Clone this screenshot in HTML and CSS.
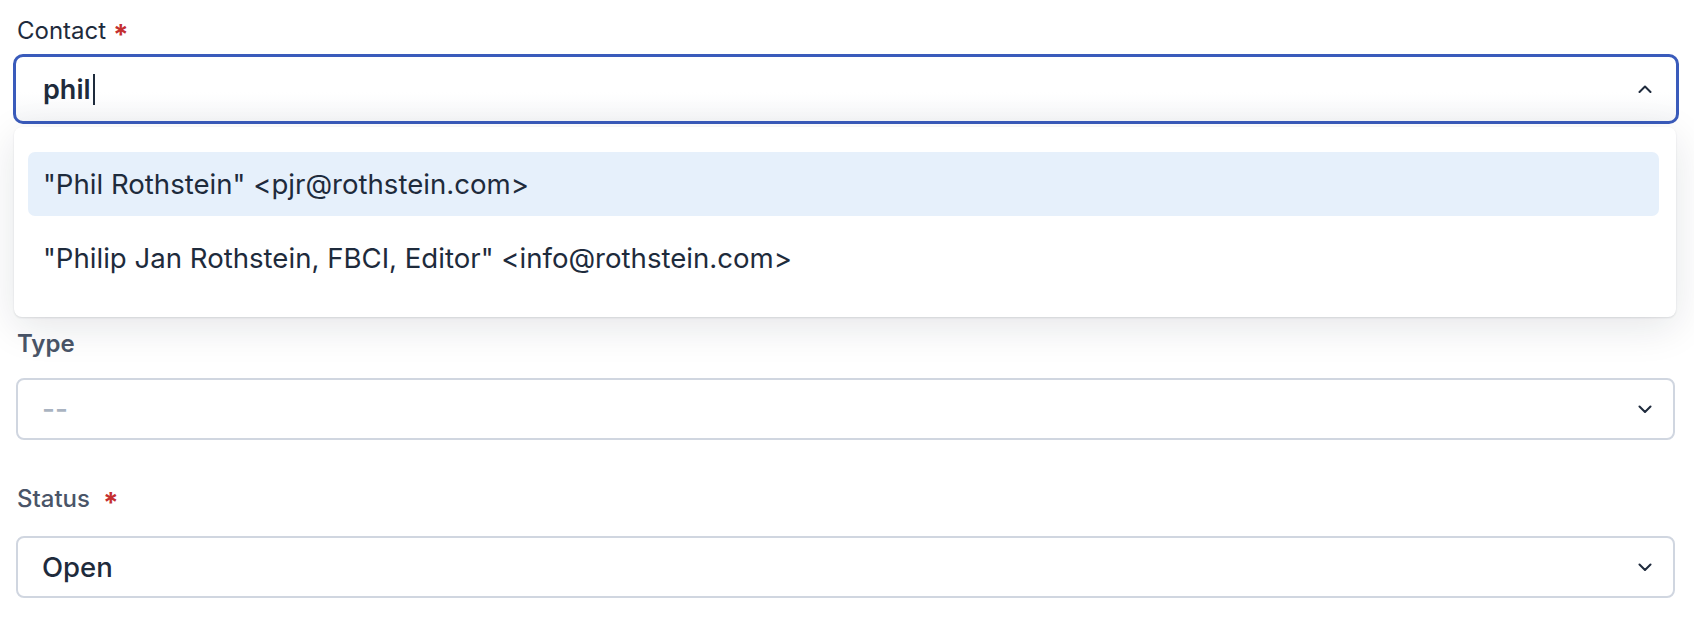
FILE: index.html
```html
<!DOCTYPE html>
<html lang="en">
<head>
<meta charset="utf-8">
<title>Contact form</title>
<link rel="stylesheet" href="styles.css">
</head>
<body>
<form class="form">
  <div class="field field-contact">
    <label class="label label-dark">Contact <span class="req">*</span></label>
    <div class="combo">
      <div class="combo-input">
        <span class="typed">phil</span><span class="caret"></span>
        <svg class="chev chev-up" viewBox="0 0 14 8" width="14" height="8"><path d="M1.5 7 L7 1.5 L12.5 7" fill="none" stroke="#1f2b3d" stroke-width="2" stroke-linecap="round" stroke-linejoin="round"/></svg>
      </div>
      <ul class="menu">
        <li class="option active">"Phil Rothstein" &lt;pjr@rothstein.com&gt;</li>
        <li class="option">"Philip Jan Rothstein, FBCI, Editor" &lt;info@rothstein.com&gt;</li>
      </ul>
    </div>
  </div>

  <div class="field field-type">
    <label class="label label-type">Type</label>
    <div class="select">
      <span class="placeholder">--</span>
      <svg class="chev" viewBox="0 0 14 8" width="14" height="8"><path d="M1.5 1.5 L7 7 L12.5 1.5" fill="none" stroke="#1f2b3d" stroke-width="2" stroke-linecap="round" stroke-linejoin="round"/></svg>
    </div>
  </div>

  <div class="field field-status">
    <label class="label label-status">Status <span class="req">*</span></label>
    <div class="select">
      <span class="value">Open</span>
      <svg class="chev" viewBox="0 0 14 8" width="14" height="8"><path d="M1.5 1.5 L7 7 L12.5 1.5" fill="none" stroke="#1f2b3d" stroke-width="2" stroke-linecap="round" stroke-linejoin="round"/></svg>
    </div>
  </div>
</form>
</body>
</html>
```

FILE: styles.css
```css
* { box-sizing: border-box; }
html, body { margin: 0; padding: 0; background: #ffffff; }
body {
  font-family: Inter, "Noto Sans", "Liberation Sans", sans-serif;
  color: #1e2b3c;
}
.form {
  padding: 15px 15px 0 13px;
  display: flex;
  flex-direction: column;
}
.field { display: flex; flex-direction: column; }
.label {
  font-size: 24px;
  line-height: 32px;
  display: flex;
  align-items: center;
}
.label-dark { color: #1e2b3c; font-weight: 400; padding-left: 4px; margin-bottom: 7px; gap: 7px; }
.label-type { color: #4a5568; font-weight: 600; padding-left: 1px; margin-bottom: 18px; }
.label-status { color: #4a5568; font-weight: 500; padding-left: 1px; margin-bottom: 21px; gap: 13px; }
.req {
  color: #c53030;
  font-weight: 700;
  font-size: 28px;
  line-height: 1;
  position: relative;
  top: 4px;
}
.field-type { margin-top: 204px; padding-left: 3px; padding-right: 4px; }
.field-status { margin-top: 43px; padding-left: 3px; padding-right: 4px; }

.combo { position: relative; }
.combo-input {
  height: 70px;
  border: 3px solid #3a5bbb;
  border-radius: 10px;
  display: flex;
  align-items: center;
  padding: 0 24px 0 27px;
  background: linear-gradient(to bottom, #ffffff 55%, #f6f7f9 100%);
}
.typed { font-size: 27px; font-weight: 600; color: #1e2b3c; }
.caret { width: 2px; height: 31px; background: #1e2b3c; margin-left: 2px; }
.chev { margin-left: auto; display: block; }

.menu {
  position: absolute;
  top: calc(100% + 3px);
  left: 1px;
  right: 3px;
  z-index: 10;
  margin: 0;
  list-style: none;
  background: #fff;
  border-radius: 8px;
  padding: 25px 17px 27px 14px;
  display: flex;
  flex-direction: column;
  gap: 10px;
  box-shadow: 0 1px 2px rgba(15, 23, 42, 0.12), 0 10px 40px rgba(15, 23, 42, 0.11);
}
.option {
  height: 64px;
  display: flex;
  align-items: center;
  padding-left: 15px;
  border-radius: 7px;
  font-size: 27.6px;
  color: #1e2b3c;
}
.option.active { background: #e6f0fb; }

.select {
  height: 62px;
  border: 2px solid #d0d6e0;
  border-radius: 8px;
  display: flex;
  align-items: center;
  padding: 0 21px 0 24px;
  background: #fff;
}
.placeholder { font-size: 28px; font-weight: 500; color: #a9b3c1; }
.value { font-size: 27.5px; font-weight: 500; color: #1e2b3c; }
```
